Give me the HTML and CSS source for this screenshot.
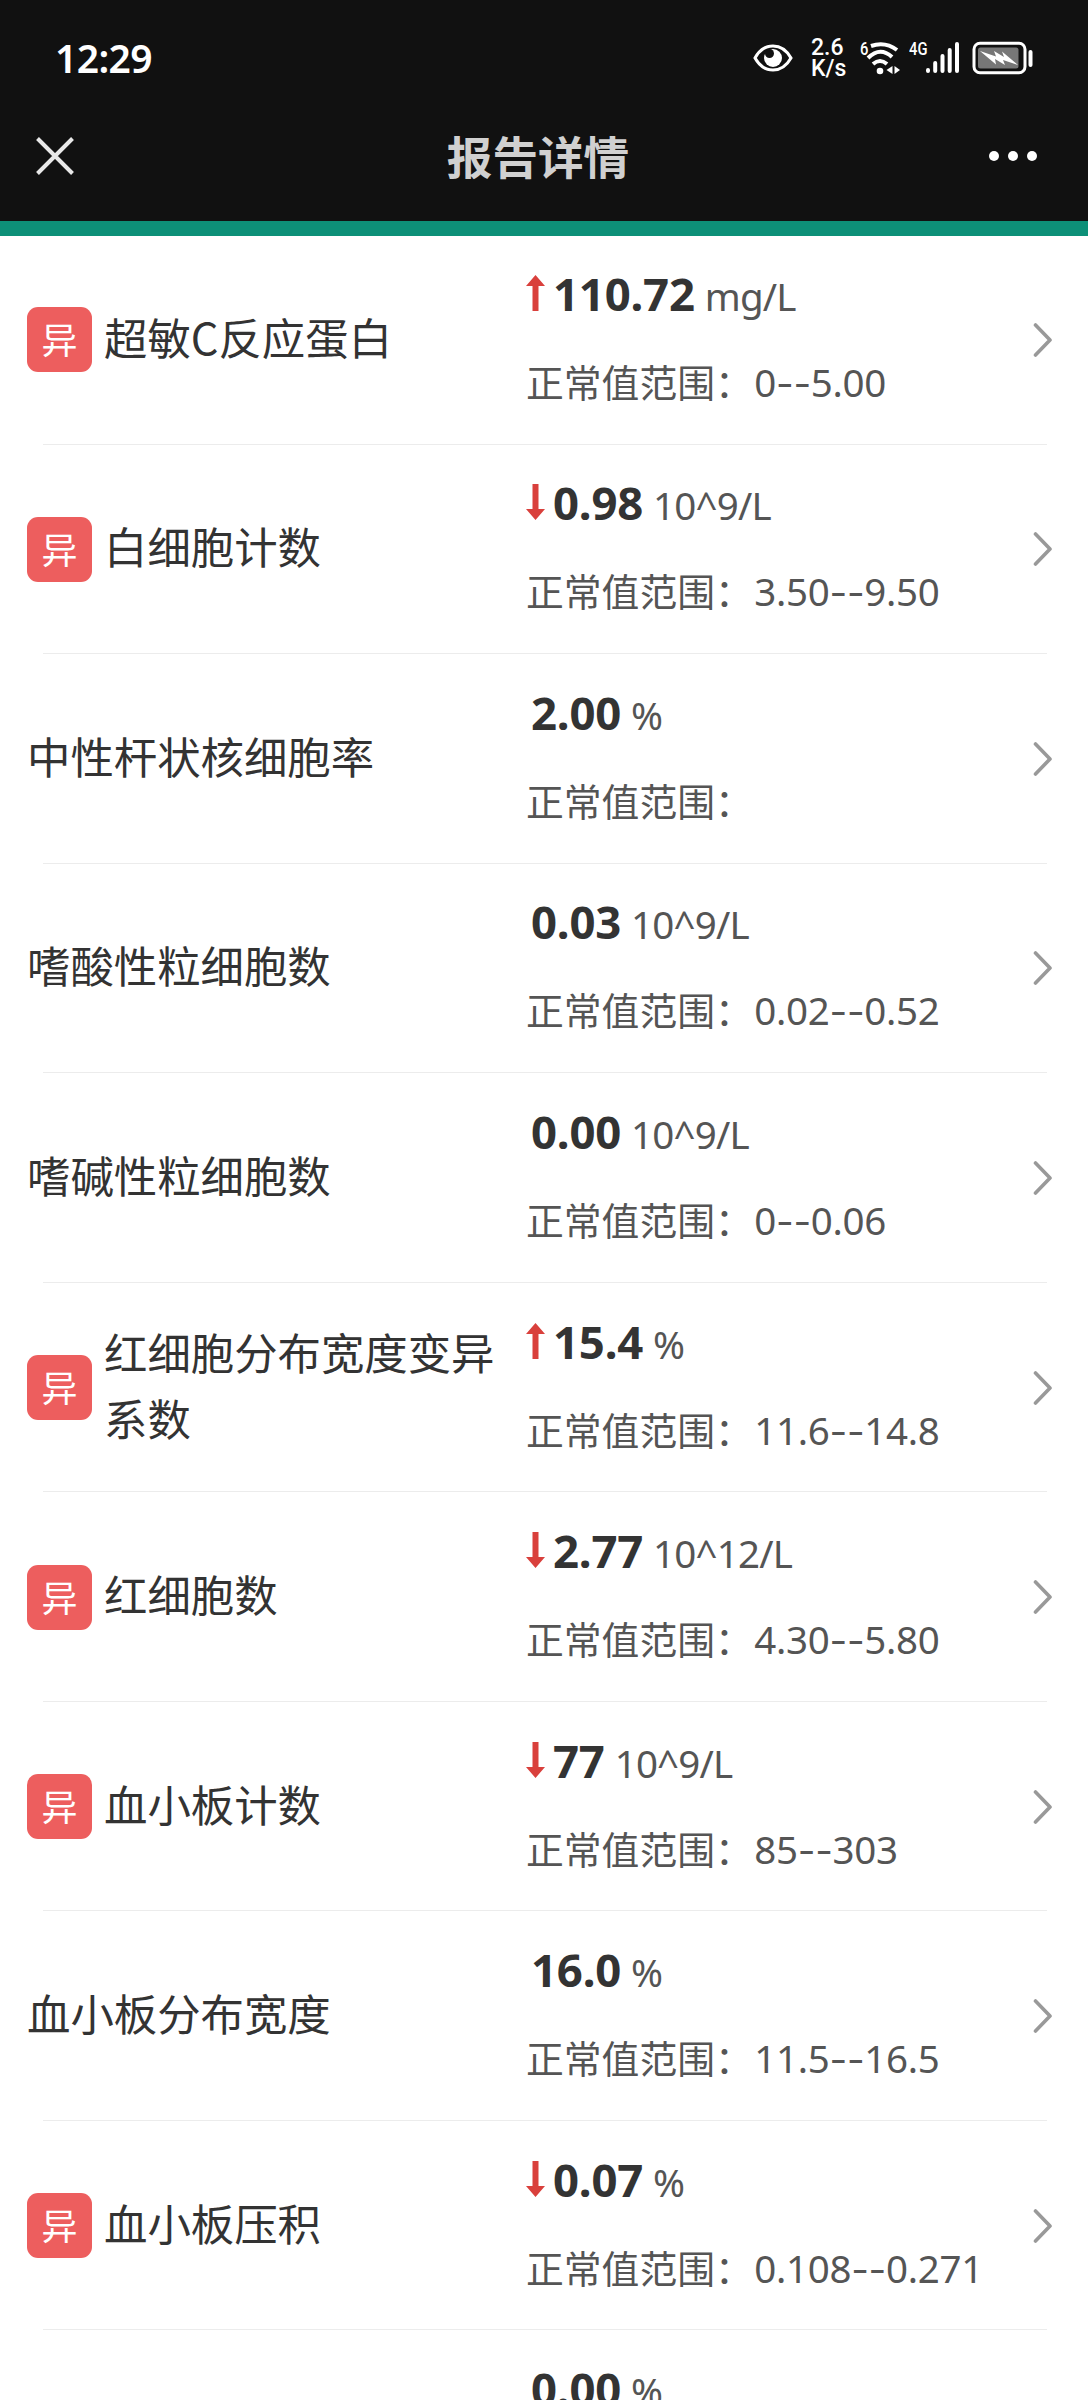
FILE: index.html
```
<!DOCTYPE html>
<html lang="zh-CN">
<head>
  <meta charset="UTF-8" />
  <meta name="viewport" content="width=device-width, initial-scale=1.0"/>
  <title>报告详情</title>
  <link rel="stylesheet" href="styles.css">
</head>
<body>
  <!-- shared icons -->
  <svg class="sprite" width="0" height="0">
    <symbol id="up" viewBox="0 0 19 36"><path d="M9.5 0 19 11H12.5V36H6.5V11H0Z"/></symbol>
    <symbol id="down" viewBox="0 0 19 36"><path d="M9.5 36 19 25H12.5V0H6.5V25H0Z"/></symbol>
    <symbol id="chevron" viewBox="0 0 20 36"><path d="M2.5 3 17 18 2.5 33" fill="none" stroke="#999" stroke-width="3.6" stroke-linecap="round" stroke-linejoin="round"/></symbol>
  </svg>

  <header class="header">
    <div class="status-bar">
      <span class="time">12:29</span>
      <div class="status-icons">
        <svg class="eye" width="40" height="28" viewBox="0 0 40 28">
          <path d="M2 14C11-2 29-2 38 14C29 30 11 30 2 14Z" fill="none" stroke="#fff" stroke-width="3"/>
          <circle cx="20" cy="14" r="9" fill="#fff"/>
          <circle cx="16.500" cy="9.500" r="4.500" fill="#111"/>
        </svg>
        <div class="speed"><span>2.6</span><span>K/s</span></div>
        <span class="tag wifi-tag">6</span>
        <svg class="wifi" width="34" height="34" viewBox="0 0 34 34">
          <g fill="none" stroke="#fff" stroke-width="4">
            <path d="M5 5Q19 0 31 9"/>
            <path d="M2 17Q14 5 26 16"/>
            <path d="M7 23Q14 17 21 23"/>
          </g>
          <circle cx="14" cy="30" r="3.300" fill="#fff"/>
          <path d="M26.500 25V33L20.500 29ZM28.500 25V33L34 29Z" fill="#fff"/>
        </svg>
        <span class="tag net-tag">4G</span>
        <svg class="signal" width="34" height="33" viewBox="0 0 34 33">
          <g stroke="#fff" stroke-width="4" stroke-linecap="round">
            <path d="M2 29V30M9.200 22V30M16.500 15V30M23.700 9V30M31 3V30"/>
          </g>
        </svg>
        <svg class="battery" width="62" height="34" viewBox="0 0 62 34">
          <rect x="2" y="2.200" width="51" height="29.600" rx="6" fill="none" stroke="#fff" stroke-width="3"/>
          <rect x="6" y="6.500" width="40.500" height="21" rx="2.500" fill="#777"/>
          <path d="M8 10 24 15.500 22 10 32 16 30 10.500 46 24 31 19 33 24 23 18 24 23.500Z" fill="#fff"/>
          <path d="M58.500 11V24" stroke="#fff" stroke-width="4" stroke-linecap="round"/>
        </svg>
      </div>
    </div>
    <div class="nav-bar">
      <svg class="close" width="38" height="38" viewBox="0 0 38 38"><path d="M1.500 1.500 36.500 36.500M36.500 1.500 1.500 36.500" stroke="#e8e8e8" stroke-width="4"/></svg>
      <h1 class="title">报告详情</h1>
      <svg class="more" width="50" height="12" viewBox="0 0 50 12" fill="#fff"><circle cx="6" cy="6" r="5"/><circle cx="25" cy="6" r="5"/><circle cx="44" cy="6" r="5"/></svg>
    </div>
  </header>

  <main class="list">
    <div class="row">
      <div class="item"><span class="badge">异</span><span class="name">超敏C反应蛋白</span></div>
      <div class="data">
        <div class="result"><svg class="arrow"><use href="#up"/></svg><b>110.72</b><span class="unit">mg/L</span></div>
        <div class="range">正常值范围：<span class="num">0<i>--</i>5.00</span></div>
      </div>
      <svg class="chevron"><use href="#chevron"/></svg>
    </div>
    <div class="row">
      <div class="item"><span class="badge">异</span><span class="name">白细胞计数</span></div>
      <div class="data">
        <div class="result"><svg class="arrow"><use href="#down"/></svg><b>0.98</b><span class="unit">10^9/L</span></div>
        <div class="range">正常值范围：<span class="num">3.50<i>--</i>9.50</span></div>
      </div>
      <svg class="chevron"><use href="#chevron"/></svg>
    </div>
    <div class="row">
      <div class="item"><span class="name">中性杆状核细胞率</span></div>
      <div class="data">
        <div class="result normal"><b>2.00</b><span class="unit">%</span></div>
        <div class="range">正常值范围：</div>
      </div>
      <svg class="chevron"><use href="#chevron"/></svg>
    </div>
    <div class="row">
      <div class="item"><span class="name">嗜酸性粒细胞数</span></div>
      <div class="data">
        <div class="result normal"><b>0.03</b><span class="unit">10^9/L</span></div>
        <div class="range">正常值范围：<span class="num">0.02<i>--</i>0.52</span></div>
      </div>
      <svg class="chevron"><use href="#chevron"/></svg>
    </div>
    <div class="row">
      <div class="item"><span class="name">嗜碱性粒细胞数</span></div>
      <div class="data">
        <div class="result normal"><b>0.00</b><span class="unit">10^9/L</span></div>
        <div class="range">正常值范围：<span class="num">0<i>--</i>0.06</span></div>
      </div>
      <svg class="chevron"><use href="#chevron"/></svg>
    </div>
    <div class="row">
      <div class="item"><span class="badge">异</span><span class="name">红细胞分布宽度变异系数</span></div>
      <div class="data">
        <div class="result"><svg class="arrow"><use href="#up"/></svg><b>15.4</b><span class="unit">%</span></div>
        <div class="range">正常值范围：<span class="num">11.6<i>--</i>14.8</span></div>
      </div>
      <svg class="chevron"><use href="#chevron"/></svg>
    </div>
    <div class="row">
      <div class="item"><span class="badge">异</span><span class="name">红细胞数</span></div>
      <div class="data">
        <div class="result"><svg class="arrow"><use href="#down"/></svg><b>2.77</b><span class="unit">10^12/L</span></div>
        <div class="range">正常值范围：<span class="num">4.30<i>--</i>5.80</span></div>
      </div>
      <svg class="chevron"><use href="#chevron"/></svg>
    </div>
    <div class="row">
      <div class="item"><span class="badge">异</span><span class="name">血小板计数</span></div>
      <div class="data">
        <div class="result"><svg class="arrow"><use href="#down"/></svg><b>77</b><span class="unit">10^9/L</span></div>
        <div class="range">正常值范围：<span class="num">85<i>--</i>303</span></div>
      </div>
      <svg class="chevron"><use href="#chevron"/></svg>
    </div>
    <div class="row">
      <div class="item"><span class="name">血小板分布宽度</span></div>
      <div class="data">
        <div class="result normal"><b>16.0</b><span class="unit">%</span></div>
        <div class="range">正常值范围：<span class="num">11.5<i>--</i>16.5</span></div>
      </div>
      <svg class="chevron"><use href="#chevron"/></svg>
    </div>
    <div class="row">
      <div class="item"><span class="badge">异</span><span class="name">血小板压积</span></div>
      <div class="data">
        <div class="result"><svg class="arrow"><use href="#down"/></svg><b>0.07</b><span class="unit">%</span></div>
        <div class="range">正常值范围：<span class="num">0.108<i>--</i>0.271</span></div>
      </div>
      <svg class="chevron"><use href="#chevron"/></svg>
    </div>
    <div class="row">
      <div class="item"></div>
      <div class="data">
        <div class="result normal"><b>0.00</b><span class="unit">%</span></div>
        <div class="range"></div>
      </div>
    </div>
  </main>
</body>
</html>
```
FILE: styles.css
```
* {
  box-sizing: border-box;
}
body {
  margin: 0;
  height: 2400px;
  overflow: hidden;
  background: #fff;
  color: #333;
  font-family: "Noto Sans", "Noto Sans CJK SC", sans-serif;
}
svg {
  display: block;
  flex: none;
}
.sprite {
  position: absolute;
}

/* header */
.header {
  height: 236px;
  background: #111;
  border-bottom: 15px solid #0d9078;
}
.status-bar {
  height: 115px;
  padding: 0 54px 0 55px;
  display: flex;
  justify-content: space-between;
  align-items: center;
  color: #fff;
}
.time {
  font-size: 39px;
  font-weight: 600;
  line-height: 50px;
  letter-spacing: -0.6px;
}
.status-icons {
  display: flex;
  align-items: center;
}
.speed {
  display: flex;
  flex-direction: column;
  width: 36px;
  margin: 0 13px 0 18px;
  font: 500 23px/21px Roboto, sans-serif;
}
.tag {
  height: 34px;
  font: 500 18px/16px Roboto, sans-serif;
  transform: scaleX(0.82);
  transform-origin: left;
}
.wifi-tag {
  width: 6px;
}
.net-tag {
  width: 17px;
  margin-left: 9px;
}
.battery {
  margin-left: 12px;
}
.nav-bar {
  height: 82px;
  padding: 0 50px 0 36px;
  display: grid;
  grid-template-columns: 50px 1fr 50px;
  align-items: center;
}
.title {
  margin: 0 0 3px;
  padding-left: 2px;
  text-align: center;
  font: 700 45.6px/60px "Noto Sans CJK SC", sans-serif;
  color: #d0d0d0;
}

/* report list */
.list {
  margin-top: -1px;
}
.row {
  height: 209.55px;
  padding: 0 35px 0 27px;
  display: flex;
  align-items: center;
  background: linear-gradient(#ececec, #ececec) 43px 100% / 1004px 1px no-repeat;
}
.item {
  flex: none;
  width: 499px;
  display: flex;
  align-items: center;
}
.badge {
  flex: none;
  width: 65px;
  height: 65px;
  margin-right: 12px;
  border-radius: 11px;
  background: #ed5e5e;
  color: #fff;
  font: 36px/62px "Noto Sans CJK SC", sans-serif;
  text-align: center;
}
.name {
  max-width: 394px;
  padding-bottom: 8px;
  font: 43.4px/66px "Noto Sans CJK SC", sans-serif;
}
.data {
  flex: 1;
}
.result {
  height: 86px;
  display: flex;
  align-items: baseline;
  line-height: 80px;
}
.result b {
  font-size: 45.5px;
  letter-spacing: -0.2px;
}
.normal {
  padding-left: 5px;
}
.arrow {
  width: 19px;
  height: 36px;
  margin-right: 8px;
  fill: #d9403c;
}
.unit {
  margin-left: 10px;
  font-size: 38.5px;
  letter-spacing: -0.8px;
  color: #555;
}
.range {
  height: 88px;
  font-size: 37.8px;
  line-height: 87px;
  color: #555;
  white-space: nowrap;
}
.num {
  margin-left: 1.5px;
  font-size: 38.5px;
  letter-spacing: -0.3px;
}
.num i {
  font-family: Inter, sans-serif;
  font-style: normal;
}
.chevron {
  width: 20px;
  height: 36px;
}
```
